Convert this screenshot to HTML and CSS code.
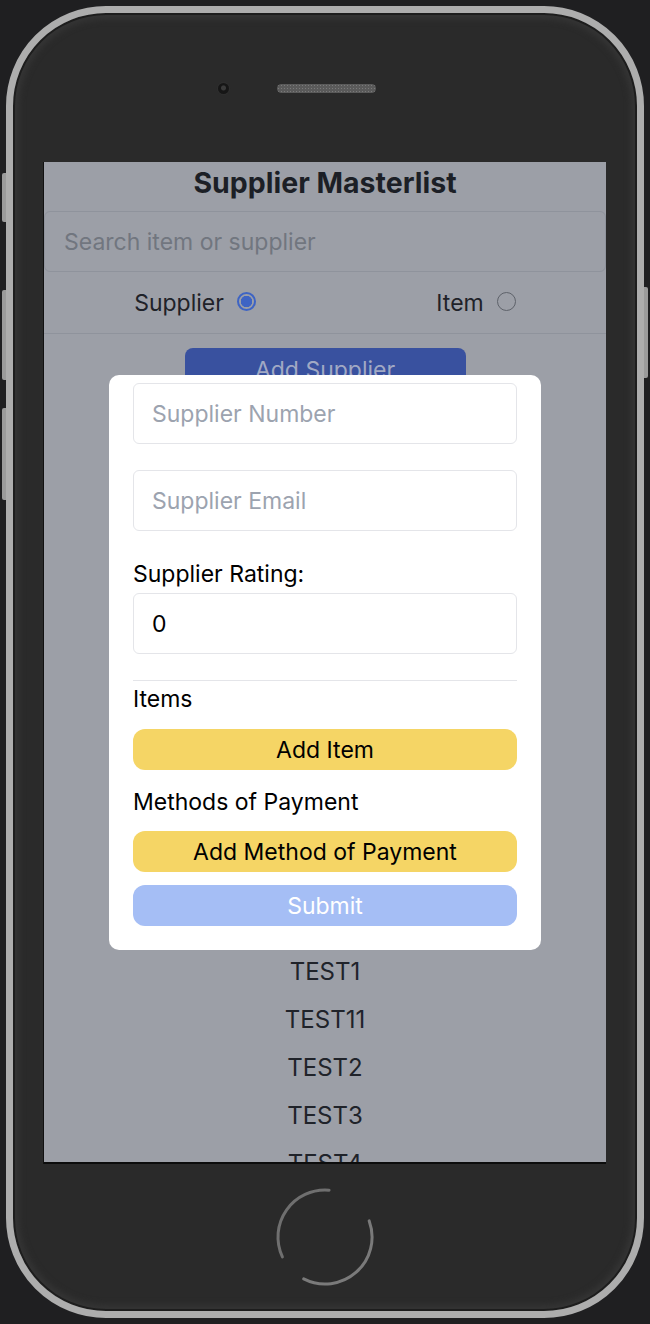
FILE: index.html
```html
<!DOCTYPE html>
<html lang="en">
<head>
<meta charset="utf-8">
<title>Supplier Masterlist</title>
<link rel="stylesheet" href="styles.css">
</head>
<body>
<div class="phone">
  <span class="side-btn side-l1"></span>
  <span class="side-btn side-l2"></span>
  <span class="side-btn side-l3"></span>
  <span class="side-btn side-r1"></span>
  <div class="bezel-top">
    <span class="camera"></span>
    <span class="speaker"></span>
  </div>
  <div class="screen">
    <h1 class="title">Supplier Masterlist</h1>
    <div class="search">Search item or supplier</div>
    <div class="filter-row">
      <div class="filter-opt"><span>Supplier</span><span class="radio radio-on"></span></div>
      <div class="filter-opt"><span>Item</span><span class="radio"></span></div>
    </div>
    <div class="add-row"><div class="add-supplier">Add Supplier</div></div>
    <ul class="list">
      <li>TEST1</li>
      <li>TEST11</li>
      <li>TEST2</li>
      <li>TEST3</li>
      <li>TEST4</li>
    </ul>
    <div class="modal">
      <div class="field">Supplier Number</div>
      <div class="field">Supplier Email</div>
      <div class="label label-rating">Supplier Rating:</div>
      <div class="field field-value">0</div>
      <div class="divider"></div>
      <div class="label label-items">Items</div>
      <div class="btn btn-yellow">Add Item</div>
      <div class="label label-pay">Methods of Payment</div>
      <div class="btn btn-yellow">Add Method of Payment</div>
      <div class="btn btn-submit">Submit</div>
    </div>
  </div>
  <div class="home">
    <svg width="100" height="100" viewBox="0 0 100 100">
      <path d="M54.1 3.2 A47 47 0 0 0 7.4 69.9" fill="none" stroke="#6f6f6f" stroke-width="3" stroke-linecap="round"/>
      <path d="M94.2 33.9 A47 47 0 0 1 28.7 91.9" fill="none" stroke="#7a7a7a" stroke-width="3" stroke-linecap="round"/>
    </svg>
  </div>
</div>
</body>
</html>
```
FILE: styles.css
```css
* { box-sizing: border-box; }
html, body { margin: 0; padding: 0; }
body {
  background: #1f1f21;
  font-family: Inter, "Noto Sans", "Liberation Sans", sans-serif;
  width: 650px;
  height: 1324px;
  overflow: hidden;
}
.phone {
  position: relative;
  margin: 6px 0 0 6px;
  width: 638px;
  height: 1312px;
  border: 7px solid #adadad;
  border-radius: 100px;
  background: #2a2a2a;
  box-shadow: inset 0 0 0 2px #1d1d1d, inset 0 0 6px 6px #353535;
  padding: 0 31px;
}
.side-btn {
  position: absolute;
  z-index: -1;
  width: 8px;
  background: #9b9b9b;
  border-radius: 2px;
}
.side-l1 { left: -11px; top: 160px; height: 49px; }
.side-l2 { left: -11px; top: 277px; height: 90px; }
.side-l3 { left: -11px; top: 395px; height: 92px; }
.side-r1 { right: -11px; top: 274px; height: 91px; }

.bezel-top {
  height: 149px;
  display: flex;
  align-items: flex-start;
  padding-top: 70px;
}
.camera {
  width: 11px;
  height: 11px;
  margin-left: 174px;
  border-radius: 50%;
  background: radial-gradient(circle at 50% 45%, #3a3a3a 0 2px, #161616 3px);
  box-shadow: 0 0 0 1px #2f2f2f;
}
.speaker {
  width: 99px;
  height: 9px;
  margin-left: 48px;
  margin-top: 1px;
  border-radius: 5px;
  background-color: #5a5a5a;
  background-image: radial-gradient(circle, #7a7a7a 0.8px, transparent 1px);
  background-size: 3px 3px;
}

.screen {
  position: relative;
  width: 562px;
  height: 1002px;
  overflow: hidden;
  background: #9c9fa7;
  border-bottom: 2px solid #0c0c0c;
  box-shadow: -1px 0 0 #111;
}
.title {
  margin: 0;
  height: 49px;
  line-height: 42px;
  text-align: center;
  font-size: 28.5px;
  font-weight: 700;
  color: #1c1f26;
}
.search {
  height: 61px;
  border: 1px solid #8f939c;
  border-radius: 6px;
  padding-left: 19px;
  display: flex;
  align-items: center;
  font-size: 23px;
  color: #71767f;
}
.filter-row {
  height: 62px;
  border-bottom: 1px solid #8f939c;
  display: grid;
  grid-template-columns: 1fr 1fr;
}
.filter-opt {
  display: flex;
  align-items: center;
  justify-content: center;
  gap: 13px;
  padding-left: 21px;
  font-size: 23px;
  color: #1f2229;
}
.radio {
  width: 19px;
  height: 19px;
  border-radius: 50%;
  border: 1.5px solid #5e626a;
  margin-top: -2px;
}
.radio-on {
  border: 2px solid #3e64c4;
  background: radial-gradient(circle, #3e64c4 0 5.5px, transparent 6px);
}
.add-row {
  display: flex;
  justify-content: center;
  padding-top: 14px;
}
.add-supplier {
  width: 281px;
  height: 44px;
  border-radius: 8px;
  background: #39519f;
  color: #a1a9c4;
  font-size: 23px;
  text-align: center;
  line-height: 44px;
}
.list {
  list-style: none;
  margin: 556px 0 0;
  padding: 0;
}
.list li {
  height: 48px;
  line-height: 48px;
  text-align: center;
  font-size: 24px;
  color: #20232a;
}

.modal {
  position: absolute;
  left: 65px;
  top: 213px;
  width: 432px;
  height: 575px;
  background: #ffffff;
  border-radius: 10px;
  padding: 8px 24px 0;
  display: flex;
  flex-direction: column;
}
.field {
  height: 61px;
  border: 1.5px solid #e4e5e9;
  border-radius: 6px;
  padding-left: 18px;
  display: flex;
  align-items: center;
  font-size: 23px;
  color: #9ca3af;
  margin-bottom: 26px;
}
.field-value {
  color: #000;
}
.label {
  font-size: 23px;
  line-height: 34px;
  color: #000;
}
.label-rating { margin-bottom: 2px; }
.divider {
  height: 1px;
  background: #e4e5e9;
  margin-bottom: 1px;
}
.label-items { margin-bottom: 13px; }
.label-pay { margin-top: 15px; margin-bottom: 12px; }
.btn {
  height: 41px;
  border-radius: 12px;
  text-align: center;
  line-height: 43px;
  font-size: 23px;
  color: #000;
}
.btn-yellow { background: #f5d565; }
.btn-submit {
  margin-top: 13px;
  background: #a5bef5;
  color: #fff;
}
.home {
  display: flex;
  justify-content: center;
  margin-top: 23px;
}
.home svg { display: block; }
```
